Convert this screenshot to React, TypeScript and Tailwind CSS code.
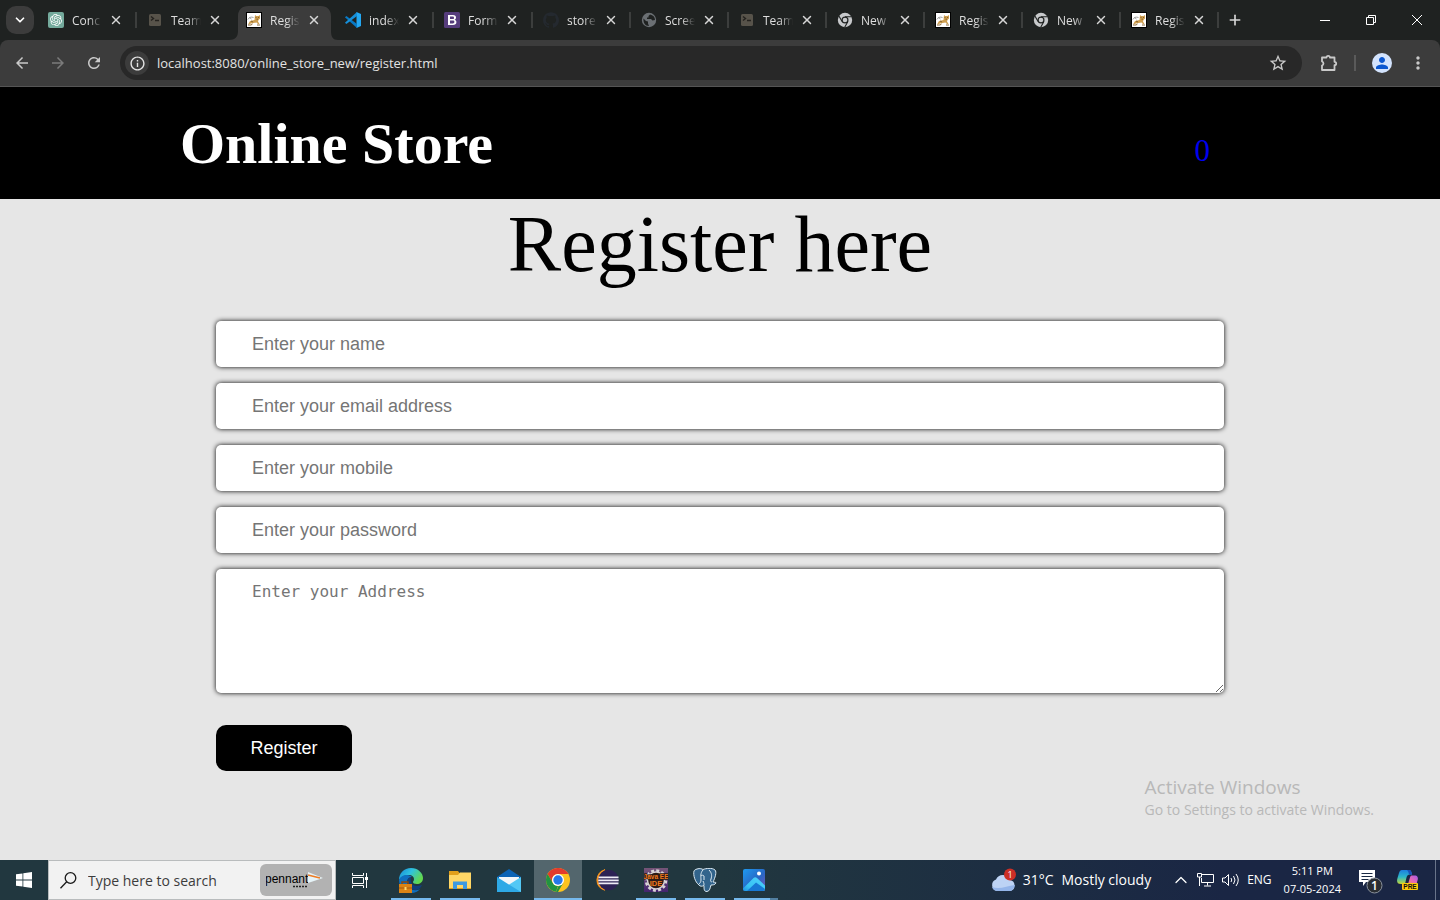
import React from "react";
import { ChevronDown, ChevronUp, Plus, X } from "lucide-react";
import { MdArrowBack, MdArrowForward, MdInfoOutline, MdMoreVert, MdPerson, MdRefresh, MdStarOutline } from "react-icons/md";
import { SiGithub, SiOpenai } from "react-icons/si";

type IconName = "gpt" | "terminal" | "tomcat" | "vscode" | "bootstrap" | "github" | "globe" | "chrome";

const tabs: { icon: IconName; title: string; active?: boolean }[] = [
  { icon: "gpt", title: "Conc" },
  { icon: "terminal", title: "Team" },
  { icon: "tomcat", title: "Regis", active: true },
  { icon: "vscode", title: "index" },
  { icon: "bootstrap", title: "Form" },
  { icon: "github", title: "store" },
  { icon: "globe", title: "Scree" },
  { icon: "terminal", title: "Team" },
  { icon: "chrome", title: "New" },
  { icon: "tomcat", title: "Regis" },
  { icon: "chrome", title: "New" },
  { icon: "tomcat", title: "Regis" },
];

function Favicon({ name }: { name: IconName }) {
  switch (name) {
    case "gpt":
      return (
        <span className="flex size-4 items-center justify-center rounded-xs bg-[#74aa9c]">
          <SiOpenai className="size-3 text-white" />
        </span>
      );
    case "terminal":
      return (
        <svg viewBox="0 0 16 16" className="size-4">
          <rect x="2" y="2" width="12" height="12" rx="1.5" fill="#57534a" />
          <path d="M4 4.5l2.5 2L4 8.500M8 8.500h4" stroke="#24221e" strokeWidth="1.4" fill="none" />
        </svg>
      );
    case "tomcat":
      return (
        <svg viewBox="0 0 16 16" className="size-4">
          <rect width="16" height="16" fill="#000" />
          <rect x="1" y="1" width="14" height="14" fill="#fff" />
          <path d="M9 3l1.200 1h2.300L14 3v3.500L12.500 8l-.5 1.500 1.500 2.500h-1.500L10.500 10.500l-3 .5-2.500.500L2 12.500l2-3.500L8.500 8z" fill="#cf9f50" />
          <path d="M2 13h3l1.500-1M11 13h3M9.500 5.500h1M12 5.500h1M10.500 7.200h1.500M5 9l2 1" stroke="#7d5a26" strokeWidth=".9" fill="none" />
          <path d="M7.500 5.500C5 4.500 3 5.500 1.800 7.500M3.500 5.500l2 1.500" stroke="#8a8a88" strokeWidth=".8" fill="none" />
        </svg>
      );
    case "vscode":
      return (
        <svg viewBox="0 0 16 16" className="size-4">
          <path d="M11.500 0L16 2v12l-4.500 2z" fill="#24a8f2" />
          <path d="M0 5.200L1.400 4 12 12v4L.2 5.600z" fill="#0879c4" />
          <path d="M0 10.800L1.400 12 12 4V0L.2 10.400z" fill="#168fd9" />
        </svg>
      );
    case "bootstrap":
      return (
        <svg viewBox="0 0 16 16" className="size-4">
          <rect width="16" height="16" rx="1.500" fill="#563d7c" />
          <path
            fillRule="evenodd"
            fill="#fff"
            d="M4 3h5c2 0 3 1 3 2.500 0 1.100-.6 1.900-1.500 2.200 1.200.3 1.900 1.200 1.900 2.500C12.400 12 11 13 9 13H4zM6 4.600v2.500h2.500c1 0 1.500-.4 1.500-1.200S9.500 4.600 8.500 4.600zM6 8.600v2.800h2.700c1.100 0 1.700-.5 1.700-1.400s-.6-1.400-1.700-1.400z"
          />
        </svg>
      );
    case "github":
      return <SiGithub className="size-4 text-[#24292f]" />;
    case "globe":
      return (
        <svg viewBox="0 0 16 16" className="size-4">
          <circle cx="8" cy="8" r="7.200" fill="#6b7074" />
          <path d="M2.500 6.500L5 9l2 .5v2L8 14c-4 0-6-3.500-5.500-7.500zM9 2.500L7.500 4v1.500H6V7h4l1.500 1.500L14 8c0-3-2-5-5-5.500z" fill="#1f2221" />
        </svg>
      );
    case "chrome":
      return (
        <svg viewBox="0 0 16 16" className="size-4">
          <circle cx="8" cy="8" r="7.200" fill="#c7c9cb" />
          <circle cx="8" cy="8" r="3.500" fill="#1f2221" />
          <path d="M8 4.700h6.500M5.100 9.600L1.900 4M10.900 9.600l-3.200 5.600" stroke="#1f2221" strokeWidth="1.100" />
          <circle cx="8" cy="8" r="2.300" fill="#c7c9cb" />
        </svg>
      );
  }
}

function Tab({ icon, title, active, wide }: { icon: IconName; title: string; active?: boolean; wide: boolean }) {
  const beforeActive = title === "Team" && wide;
  return (
    <div className={`${wide ? "w-[99px]" : "w-[98px]"} relative flex h-10 items-center`}>
      {active && (
        <svg viewBox="0 0 109 34" className="absolute bottom-0 -left-[7px] h-[34px] w-[109px]">
          <path d="M0 34c6 0 9-3 9-9V10C9 4 13 0 19 0h73c6 0 10 4 10 10v15c0 6 2 9 7 9z" fill="#3c3c3c" />
        </svg>
      )}
      <div className="relative flex w-full items-center">
        <span className="ml-[10px] flex size-4 shrink-0">
          <Favicon name={icon} />
        </span>
        <span className="ml-2 w-[30px] pt-0.5 text-xs whitespace-nowrap text-[#dedede] [mask-image:linear-gradient(to_right,black_55%,transparent)]">
          {title}
        </span>
        <button aria-label={`Close ${title}`} className="ml-1.5 flex size-4 items-center justify-center text-[#d6d6d6]">
          <X size={14} strokeWidth={2.5} />
        </button>
      </div>
      {!active && !beforeActive && <span className="absolute right-0 h-4 w-0.5 bg-[#3c3e3d]" />}
    </div>
  );
}

function Browser() {
  return (
    <header className="bg-[#1f2221] font-['Open_Sans','Noto_Sans',sans-serif]">
      <div className="flex h-10 items-center">
        <button aria-label="Search tabs" className="ml-1.5 flex size-7 items-center justify-center rounded-[10px] bg-[#3c3c3c] text-white">
          <ChevronDown size={14} strokeWidth={3} />
        </button>
        <nav aria-label="Tabs" className="ml-1 flex">
          {tabs.map((tab, i) => (
            <Tab key={i} {...tab} wide={i < 5} />
          ))}
        </nav>
        <button aria-label="New tab" className="ml-2 text-[#d6d6d6]">
          <Plus size={16} strokeWidth={2.5} />
        </button>
        <div className="ml-auto flex w-[138px] items-center">
          <button aria-label="Minimize" className="flex flex-1 justify-center">
            <svg viewBox="0 0 10 10" className="size-[10px]"><path d="M0 5.500h10" stroke="#fff" /></svg>
          </button>
          <button aria-label="Restore" className="flex flex-1 justify-center">
            <svg viewBox="0 0 10 10" className="size-[10px]"><path d="M.5 2.500h7v7h-7zM2.500 2.500v-2h7v7h-2" fill="none" stroke="#fff" /></svg>
          </button>
          <button aria-label="Close window" className="flex flex-1 justify-center">
            <svg viewBox="0 0 10 10" className="size-[10px]"><path d="M0 0l10 10M10 0L0 10" stroke="#fff" /></svg>
          </button>
        </div>
      </div>
      <div className="flex h-[47px] items-center rounded-t-lg border-b border-[#555] bg-[#3c3c3c] text-[#c9c9c9]">
        <button aria-label="Back" className="ml-[13px]"><MdArrowBack size={18} /></button>
        <button aria-label="Forward" className="ml-[18px] text-[#7b7b7b]"><MdArrowForward size={18} /></button>
        <button aria-label="Reload" className="ml-[18px]"><MdRefresh size={18} /></button>
        <div className="ml-[17px] flex h-[34px] flex-1 items-center rounded-full bg-[#282828]">
          <button aria-label="Site information" className="ml-[5px] flex size-6 items-center justify-center rounded-full bg-[#3c3c3c] text-[#e3e3e3]">
            <MdInfoOutline size={17} />
          </button>
          <input
            aria-label="Address"
            defaultValue="localhost:8080/online_store_new/register.html"
            className="ml-2 min-w-0 flex-1 bg-transparent pt-0.5 text-[13px] text-[#e3e3e3] outline-none"
          />
          <button aria-label="Bookmark" className="mr-[14px]"><MdStarOutline size={20} /></button>
        </div>
        <button aria-label="Extensions" className="ml-[18px]">
          <svg viewBox="0 0 18 18" className="size-[18px]" fill="none" stroke="currentColor" strokeWidth="1.800" strokeLinejoin="round">
            <path d="M2 3.500h4.500a1.700 1.700 0 0 1 3.400 0h4.600v4.300a1.700 1.700 0 0 1 0 3.400v4.800H2v-4.500a2.100 2.100 0 0 0 0-4z" />
          </svg>
        </button>
        <span className="ml-4 h-4 w-0.5 bg-[#5a5a5a]" />
        <button aria-label="Profile" className="ml-4 flex size-5 items-center justify-center rounded-full bg-[#d3e3fd] text-[#0b57d0]">
          <MdPerson size={18} />
        </button>
        <button aria-label="Menu" className="mr-3 ml-4"><MdMoreVert size={20} /></button>
      </div>
    </header>
  );
}

const field = "block w-full rounded-[5px] bg-white px-9 text-lg text-black shadow-[0_0_5px_#000000] outline-none placeholder:text-[#757575]";

function Page() {
  return (
    <main className="relative flex-1 bg-[#e6e6e6]">
      <div className="flex h-28 items-center justify-between bg-black px-[12.5%] font-['Liberation_Serif',serif]">
        <h1 className="text-[58px] font-bold text-white">Online Store</h1>
        <a href="#cart" className="mt-4 mr-[50px] text-[31px] text-[#0000ee]">0</a>
      </div>
      <h2 className="text-center font-['Liberation_Serif',serif] text-[80px] leading-[90px]">Register here</h2>
      <form className="mx-auto mt-8 flex w-[70%] flex-col gap-4 font-['Liberation_Sans',sans-serif]">
        <input aria-label="Name" placeholder="Enter your name" className={`${field} h-[46px]`} />
        <input aria-label="Email address" type="email" placeholder="Enter your email address" className={`${field} h-[46px]`} />
        <input aria-label="Mobile" type="tel" placeholder="Enter your mobile" className={`${field} h-[46px]`} />
        <input aria-label="Password" type="password" placeholder="Enter your password" className={`${field} h-[46px]`} />
        <textarea
          aria-label="Address"
          placeholder="Enter your Address"
          className="block h-[124px] w-full rounded-[5px] bg-white px-9 py-[11px] font-['DejaVu_Sans_Mono',monospace] text-base text-black shadow-[0_0_5px_#000000] outline-none placeholder:text-[#757575]"
        />
        <button type="button" className="mt-4 h-[46px] w-[136px] self-start rounded-[10px] bg-black text-lg text-white">
          Register
        </button>
      </form>
      <div className="absolute top-[686px] right-[66px] font-['Open_Sans','Noto_Sans',sans-serif] text-[#b8b8b8]">
        <p className="text-[19px] leading-7">Activate Windows</p>
        <p className="text-sm leading-[18px]">Go to Settings to activate Windows.</p>
      </div>
    </main>
  );
}

function Edge() {
  return (
    <svg viewBox="0 0 26 26" className="size-[26px]">
      <defs>
        <linearGradient id="edge-top" x1="0" y1="0" x2="1" y2=".5">
          <stop stopColor="#1689d8" /><stop offset=".5" stopColor="#2fc2df" /><stop offset="1" stopColor="#62d84e" />
        </linearGradient>
      </defs>
      <path d="M1 13C1 6 6 1 13 1s12 5 12 10c0 4-3 6-6 6-3 0-4-1-4-2s1-1 1-3-2-4-5-4C6 8 2 11 1 13z" fill="url(#edge-top)" />
      <path d="M1 13c1-3 4-5 8-5 2 0 4 1 5 2-3 0-5 2-5 6 0 5 5 8 10 7 2 0 3-1 4-2-2 3-6 5-10 5C6 26 1 20 1 13z" fill="#0f6fc0" />
      <path d="M9 16c0-3 1-5 4-6-1 5 1 9 6 9 2 0 4-1 5-1-1 3-4 5-7 5-5 0-8-3-8-7z" fill="#123f7d" />
      <rect x="1" y="17" width="13" height="9" fill="#dc8314" />
      <path d="M4 17v-2h6v2" stroke="#8b4a0e" strokeWidth="1.500" fill="none" />
      <path d="M1 21h13" stroke="#a65a0a" /><rect x="6.500" y="20" width="2" height="3" fill="#ffd46a" />
    </svg>
  );
}

function Explorer() {
  return (
    <svg viewBox="0 0 22 20" className="h-5 w-[22px]">
      <path d="M0 1h9l1.500 2H22v16H0z" fill="#e2a01b" />
      <path d="M0 5h9l2-2.500h11V18H0z" fill="#ffd766" />
      <path d="M4 19v-7.500h14V19h-4v-4H8v4z" fill="#3d9ae0" />
    </svg>
  );
}

function Mail() {
  return (
    <svg viewBox="0 0 24 23" className="h-[23px] w-6">
      <path d="M0 8l12-8 12 8v6H0z" fill="#0b63b5" />
      <path d="M2 8h20v7l-10 3-10-3z" fill="#f2f6f9" />
      <path d="M24 8L0 23h24z" fill="#53c8f5" />
      <path d="M0 8l24 15H0z" fill="#2ea9e6" />
    </svg>
  );
}

function Chrome() {
  return (
    <svg viewBox="0 0 24 24" className="size-6">
      <circle cx="12" cy="12" r="12" fill="#fcc31e" />
      <path d="M1.600 6A12 12 0 0 1 22.400 6H12a6 6 0 0 0-5.200 9z" fill="#e33b2e" />
      <path d="M1.600 6l5.200 9a6 6 0 0 0 5.200 3l-2 5.800A12 12 0 0 1 1.600 6z" fill="#229342" />
      <path d="M17.200 15L12 24a12 12 0 0 1-2-.2L12.500 18z" fill="#229342" />
      <circle cx="12" cy="12" r="6" fill="#fff" />
      <circle cx="12" cy="12" r="4.700" fill="#2679ea" />
    </svg>
  );
}

function Eclipse() {
  return (
    <svg viewBox="0 0 24 22" className="h-[22px] w-6">
      <path d="M10 .8A10.500 10.500 0 0 0 10 21.200 12 12 0 0 1 10 .8z" fill="#f6931d" stroke="#f6931d" strokeWidth="1.200" />
      <circle cx="13.500" cy="11" r="10.300" fill="#2c2255" />
      <path d="M3.500 8.300h20M3.200 11.300h20.500M3.500 14.300h20" stroke="#eeedf7" strokeWidth="1.700" />
    </svg>
  );
}

function JavaIde() {
  return (
    <svg viewBox="0 0 24 24" className="size-6">
      <defs>
        <linearGradient id="ide-bg" x1="0" y1="0" x2="0" y2="1">
          <stop stopColor="#755578" /><stop offset="1" stopColor="#43246f" />
        </linearGradient>
      </defs>
      <rect width="24" height="24" fill="url(#ide-bg)" />
      <circle cx="12" cy="12.500" r="10" fill="none" stroke="#d8d3d6" strokeWidth="2.500" strokeDasharray="3 2.230" />
      <circle cx="12" cy="12.500" r="8.500" fill="#2c1a16" stroke="#d8d3d6" strokeWidth="1.500" />
      <text x="12" y="11" textAnchor="middle" fontSize="6.500" fontWeight="700" fill="#f07a1c" stroke="#2c1a16" strokeWidth="1.500" paintOrder="stroke" fontFamily="Liberation Sans">Java EE</text>
      <text x="12" y="18" textAnchor="middle" fontSize="7.500" fontWeight="700" fill="#f07a1c" fontFamily="Liberation Sans">IDE</text>
    </svg>
  );
}

function Postgres() {
  return (
    <svg viewBox="0 0 24 24" className="size-6">
      <path d="M4 1c3-1 5 0 6 .5C13 .3 19-.5 22 2c2 2 0 8-2 12 2 .5 3 0 3 1-1 2-4 2-5 2-1 3-1 6-4 6.500-3 0-3-2-3-6-2 1-4 1-5-.5C2 14 0 7 1 3c.5-1 1.500-1.500 3-2z" fill="#32648c" stroke="#dbe8f0" />
      <path d="M10 2C7 5 8 9 8 12c0 2-1 3-2 4M16 2c3 3 3 6 2 9-1 2 0 3 1 3M10 13c1 2 1 3 1 4M8 8c1-1 2-1 3 0v4" fill="none" stroke="#dbe8f0" />
    </svg>
  );
}

function Photos() {
  return (
    <svg viewBox="0 0 22 22" className="size-[22px]">
      <defs>
        <linearGradient id="photo-bg" x1="0" y1="0" x2="1" y2="1">
          <stop stopColor="#1e9af0" /><stop offset=".55" stopColor="#2868c5" /><stop offset="1" stopColor="#7954b5" />
        </linearGradient>
        <linearGradient id="photo-hill" x1="0" y1="1" x2="1" y2="0">
          <stop stopColor="#1d8fe2" /><stop offset=".3" stopColor="#37c3f4" /><stop offset="1" stopColor="#4fd2fb" />
        </linearGradient>
      </defs>
      <rect width="22" height="22" rx="2" fill="url(#photo-bg)" />
      <path d="M0 19.500L10.500 9c1-1 2.500-1 3.500 0l8 7.500V20a2 2 0 0 1-2 2H2a2 2 0 0 1-2-2z" fill="url(#photo-hill)" />
      <path d="M4 22l9-8.500L22 20a2 2 0 0 1-2 2z" fill="#1878d4" />
      <circle cx="16" cy="4.500" r="2" fill="#fff" />
    </svg>
  );
}

const apps: { name: string; icon: React.ReactNode; state: "idle" | "open" | "active"; stacked?: boolean }[] = [
  { name: "Edge", icon: <Edge />, state: "open" },
  { name: "File Explorer", icon: <Explorer />, state: "open" },
  { name: "Mail", icon: <Mail />, state: "idle" },
  { name: "Chrome", icon: <Chrome />, state: "active" },
  { name: "Eclipse", icon: <Eclipse />, state: "idle" },
  { name: "Java EE IDE", icon: <JavaIde />, state: "open" },
  { name: "PostgreSQL", icon: <Postgres />, state: "open" },
  { name: "Photos", icon: <Photos />, state: "open", stacked: true },
];

function Taskbar() {
  return (
    <footer className="flex h-10 items-center bg-linear-to-r from-[#21373f] from-50% to-[#1a2644] to-85% font-['Open_Sans','Noto_Sans',sans-serif] text-white">
      <button aria-label="Start" className="flex w-12 justify-center">
        <svg viewBox="0 0 16 16" className="size-4" fill="#fff">
          <path d="M0 2.300L6.500 1.400v6.200H0zM7.300 1.300L16 0v7.600H7.300zM0 8.400h6.500v6.200L0 13.700zM7.300 8.400H16V16l-8.700-1.300z" />
        </svg>
      </button>
      <div className="flex h-10 w-72 items-center border border-[#b9bcbd] bg-[#f2f2f2]">
        <svg viewBox="0 0 17 17" className="ml-[11px] size-[17px]" fill="none" stroke="#1a1a1a" strokeWidth="1.300">
          <circle cx="10.500" cy="6" r="5.300" /><path d="M6.700 9.800L.5 16.300" />
        </svg>
        <input aria-label="Search" placeholder="Type here to search" className="ml-[11px] w-[172px] bg-transparent pt-0.5 text-sm text-black outline-none placeholder:text-[#3c3c3c]" />
        <div className="flex h-8 w-[72px] items-center justify-center rounded-md bg-[#b2b2b2]">
          <svg viewBox="0 0 60 24" className="h-6 w-[60px]">
            <text x="-1" y="15" fontSize="12" fontFamily="Liberation Sans" fill="#000">pennant</text>
            <path d="M42 4l15 6-15 5z" fill="#e6f3f7" /><path d="M42 7l12 3" stroke="#ef7b22" strokeWidth="1.300" />
            <path d="M27 18.500h15" stroke="#222" strokeWidth="1.500" strokeDasharray="2 1" />
          </svg>
        </div>
      </div>
      <button aria-label="Task view" className="flex w-12 justify-center">
        <svg viewBox="0 0 17 15" className="h-[15px] w-[17px]" fill="none" stroke="#fff">
          <path d="M.5 0v2.500h11V0M.5 15v-2.500h11V15M.5 4.500h11v6H.5zM14.500 0v15" /><path d="M13 4h3v3h-3z" fill="#fff" stroke="none" />
        </svg>
      </button>
      <div className="ml-[3px] flex gap-px">
        {apps.map((app) => (
          <button
            key={app.name}
            aria-label={app.name}
            className={`relative flex h-10 w-12 items-center justify-center ${app.state === "active" ? "bg-[#53666d]" : ""}`}
          >
            {app.icon}
            {app.state === "open" && <span className="absolute inset-x-1 bottom-0 h-0.5 bg-[#76b9ed]" />}
            {app.state === "active" && <span className="absolute inset-x-0 bottom-0 h-0.5 bg-[#76b9ed]" />}
            {app.stacked && <span className="absolute right-0 bottom-0 h-0.5 w-2 bg-[#527fa0]" />}
          </button>
        ))}
      </div>
      <button className="ml-auto flex items-center text-sm">
        <svg viewBox="0 0 26 24" className="h-6 w-[26px]">
          <path d="M6 23a6 6 0 0 1-1-11.500A7.500 7.500 0 0 1 19 12a5.600 5.600 0 0 1 0 11z" fill="#bdd3f5" />
          <path d="M6 23a6 6 0 0 1-5-4c7 3 15-1 23-2-1 4-3 6-5 6z" fill="#94b5ea" />
          <circle cx="19" cy="6.500" r="6" fill="#cc2f26" />
          <text x="19" y="10" textAnchor="middle" fontSize="9" fill="#fff" fontFamily="Open Sans">1</text>
        </svg>
        <span className="ml-1.5">31°C</span>
        <span className="ml-2">Mostly cloudy</span>
      </button>
      <button aria-label="Hidden icons" className="ml-5"><ChevronUp size={20} strokeWidth={1.5} /></button>
      <button aria-label="Network" className="ml-1.5">
        <svg viewBox="0 0 17 14" className="h-[14px] w-[17px]" fill="none" stroke="#fff">
          <path d="M5 1.500h11.500v8H4.500V5M10.500 9.500v3M7 13h7M.5.500h4v3.500h-4zM2.500 4v9" />
        </svg>
      </button>
      <button aria-label="Volume" className="ml-2">
        <svg viewBox="0 0 17 14" className="h-[14px] w-[17px]" fill="none" stroke="#fff">
          <path d="M.5 5v4h2.500l3.500 3.500v-11L3 5zM9 5q1.500 2 0 4M11.500 3q3 4 0 8M14 1q4.500 6 0 12" />
        </svg>
      </button>
      <span className="ml-2 text-xs">ENG</span>
      <div className="ml-3 text-center text-[11px] leading-[18px]">
        <p>5:11 PM</p>
        <p>07-05-2024</p>
      </div>
      <button aria-label="Notifications" className="ml-[17px] pt-0.5">
        <svg viewBox="0 0 25 25" className="size-[25px]">
          <path d="M1 1h16v12H8l-3 4v-4H1z" fill="#fff" /><path d="M3.500 4.500h11M3.500 7.500h11M3.500 10.500h7" stroke="#1a2943" />
          <circle cx="16.500" cy="16.500" r="7.500" fill="#292d32" stroke="#8b929c" />
          <text x="16.500" y="21" textAnchor="middle" fontSize="12" fontWeight="600" fill="#fff" fontFamily="Open Sans">1</text>
        </svg>
      </button>
      <button aria-label="Copilot" className="mr-4 ml-3.5">
        <svg viewBox="0 0 22 20" className="h-5 w-[22px]">
          <defs>
            <linearGradient id="pilot-left" x1="0" y1="0" x2="0" y2="1">
              <stop stopColor="#1d7fe0" /><stop offset=".5" stopColor="#2cb7c9" /><stop offset="1" stopColor="#c8d934" />
            </linearGradient>
            <linearGradient id="pilot-right" x1="1" y1="0" x2="0" y2="1">
              <stop stopColor="#a45be8" /><stop offset=".6" stopColor="#e868b4" /><stop offset="1" stopColor="#f58a62" />
            </linearGradient>
          </defs>
          <path d="M5 0h7c2 0 2.500 2 3 4.500h-2c-2 0-3 1-3.500 3L8 14H4c-4 0-4.500-2.500-3.500-6L2 3C2.500 1 3.500 0 5 0z" fill="url(#pilot-left)" />
          <path d="M10 0h2c2 0 2.500 2 3 4.500h-3C11.500 3 11.500 1 10 0z" fill="#1950b8" />
          <path d="M14.500 5.500h3c3 0 4 2 3 5L19.500 14H11l2-6.500c.4-1.300.8-2 1.500-2z" fill="url(#pilot-right)" />
          <rect x="5" y="13" width="16" height="7" rx="1" fill="#ffcb0b" />
          <text x="13" y="19" textAnchor="middle" fontSize="6.500" fontWeight="800" fill="#111" fontFamily="Liberation Sans">PRE</text>
        </svg>
      </button>
      <span className="mr-1 h-10 w-px bg-[#69748a]" />
    </footer>
  );
}

export default function App() {
  return (
    <div className="flex min-h-screen flex-col">
      <Browser />
      <Page />
      <Taskbar />
    </div>
  );
}
